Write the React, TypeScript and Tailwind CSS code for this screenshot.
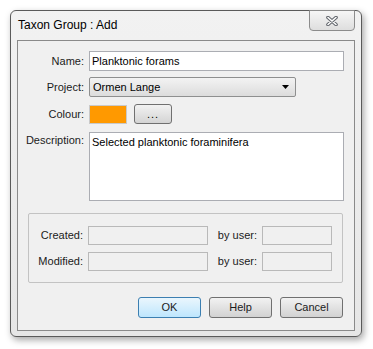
const CloseGlyph = () => (
  <svg width="12" height="10" viewBox="0 0 12 10">
    <path d="M2 1.5 L10 8.5 M10 1.5 L2 8.5" stroke="#5f636a" strokeWidth="3.6" strokeLinecap="round" />
    <path d="M2 1.5 L10 8.5 M10 1.5 L2 8.5" stroke="#ffffff" strokeWidth="1.6" strokeLinecap="round" />
  </svg>
);

const Label = ({ text, className = "" }: { text: string; className?: string }) => (
  <span className={`text-right text-[11px] text-[#1b1b1b] leading-none ${className}`}>{text}</span>
);

const winButton =
  "h-[21px] w-[63px] rounded-[3px] border text-[11px] text-[#1b1b1b] flex items-center justify-center";

export default function App() {
  return (
    <div className="min-h-screen bg-white pt-[10px] pl-[10px] font-['Liberation_Sans',Arial,sans-serif]">
      <div className="flex h-[327px] w-[352px] flex-col rounded-[6px] border border-[#5a5a5a] bg-gradient-to-b from-[#f2f2f2] to-[#e6e6e6] shadow-[2px_3px_7px_rgba(0,0,0,0.35)]">
        {/* title bar */}
        <div className="flex h-[29px] items-start justify-between">
          <span className="pl-[7px] pt-[7px] text-[12px] leading-[14px] text-black">Taxon Group : Add</span>
          <div className="mr-[6px] -mt-px flex h-[21px] w-[46px] items-center justify-center rounded-b-[4px] border border-[#8c8c8c] bg-gradient-to-b from-[#f6f6f6] to-[#dedede]">
            <CloseGlyph />
          </div>
        </div>

        {/* client area */}
        <div className="mx-[6px] flex h-[291px] flex-col border border-[#8a8a8a] bg-[#f0f0f0]">
          <div className="mt-[10px] flex items-center">
            <Label text="Name:" className="w-[66px]" />
            <div className="ml-[5px] flex h-[20px] w-[255px] items-center border border-[#abadb3] bg-white px-[2px] text-[11px] text-black">
              Planktonic forams
            </div>
          </div>

          <div className="mt-[6px] flex items-center">
            <Label text="Project:" className="w-[66px]" />
            <div className="ml-[5px] flex h-[20px] w-[207px] items-center justify-between rounded-[2px] border border-[#8e8f8f] bg-gradient-to-b from-[#f3f3f3] to-[#dcdcdc] pl-[3px] pr-[6px] text-[11px] text-black">
              <span>Ormen Lange</span>
              <svg width="7" height="4" viewBox="0 0 7 4">
                <path d="M0 0 H7 L3.5 4 Z" fill="#000" />
              </svg>
            </div>
          </div>

          <div className="mt-[7px] flex items-center">
            <Label text="Colour:" className="w-[66px]" />
            <div className="ml-[5px] h-[19px] w-[38px] border border-[#c9c9c9] bg-[#ff9900]" />
            <div className="ml-[7px] flex h-[20px] w-[38px] items-center justify-center rounded-[3px] border border-[#707070] bg-gradient-to-b from-[#f2f2f2] to-[#d4d4d4] pt-[1px] text-[11px] tracking-[1px] text-black">
              ...
            </div>
          </div>

          <div className="mt-[8px] flex items-start">
            <Label text="Description:" className="w-[66px] pt-[3px]" />
            <div className="ml-[5px] h-[69px] w-[255px] border border-[#abadb3] bg-white px-[2px] pt-[3px] text-[11px] leading-[13px] text-black">
              Selected planktonic foraminifera
            </div>
          </div>

          {/* audit group */}
          <div className="ml-[10px] mt-[12px] flex h-[70px] w-[315px] flex-col gap-[7px] rounded-[2px] border border-[#c3c3c3] pt-[12px]">
            {["Created:", "Modified:"].map((t) => (
              <div key={t} className="flex items-center">
                <Label text={t} className="w-[54px]" />
                <div className="ml-[5px] h-[19px] w-[120px] border border-[#b9b9b9] bg-[#f0f0f0]" />
                <Label text="by user:" className="ml-[4px] w-[45px]" />
                <div className="ml-[5px] h-[19px] w-[70px] border border-[#b9b9b9] bg-[#f0f0f0]" />
              </div>
            ))}
          </div>

          {/* buttons */}
          <div className="mt-[14px] flex justify-end gap-[8px] pr-[11px]">
            <div className={`${winButton} border-[#3c7fb1] bg-gradient-to-b from-[#eaf6fd] to-[#bee6fd]`}>OK</div>
            <div className={`${winButton} border-[#707070] bg-gradient-to-b from-[#f2f2f2] to-[#d2d2d2]`}>Help</div>
            <div className={`${winButton} border-[#707070] bg-gradient-to-b from-[#f2f2f2] to-[#d2d2d2]`}>Cancel</div>
          </div>
        </div>
      </div>
    </div>
  );
}
